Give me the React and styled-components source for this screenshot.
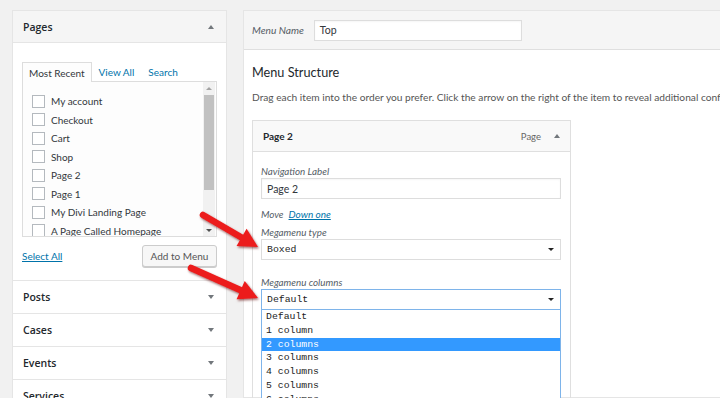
import React from 'react';
import styled, { createGlobalStyle, css } from 'styled-components';

const GlobalStyle = createGlobalStyle`
    body {
        margin: 0;
        background: #f1f1f1;
        font-family: Lato, "Noto Sans", sans-serif;
        color: #444;
        overflow: hidden;
    }
`;

const Page = styled.div`
    position: relative;
    display: flex;
    gap: 16px;
    width: 720px;
    height: 398px;
    padding: 10px 0 0 12px;
    box-sizing: border-box;
    overflow: hidden;
`;

/* ---------- left column ---------- */

const Sidebar = styled.div`
    flex: none;
    width: 215px;
    background: #fff;
    border: 1px solid #e5e5e5;
    box-sizing: border-box;
    align-self: flex-start;
`;

const Section = styled.div`
    & + & {
        border-top: 1px solid #e5e5e5;
    }
`;

const SectionTitle = styled.div`
    display: flex;
    align-items: center;
    justify-content: space-between;
    height: 32px;
    padding: 0 12px 0 10px;
    background: ${({ open }) => (open ? '#f5f5f5' : '#fff')};
    border-bottom: ${({ open }) => (open ? '1px solid #e5e5e5' : 'none')};
    box-sizing: border-box;
    font-family: "Open Sans", Lato, sans-serif;
    font-size: 10.5px;
    font-weight: 600;
    color: #23282d;
`;

const Caret = styled.span`
    width: 0;
    height: 0;
    border-left: ${({ size }) => size || 3.5}px solid transparent;
    border-right: ${({ size }) => size || 3.5}px solid transparent;
    ${({ up, color, size }) =>
        up
            ? css`border-bottom: ${(size || 3.5) + 0.5}px solid ${color || '#72777c'};`
            : css`border-top: ${(size || 3.5) + 0.5}px solid ${color || '#72777c'};`}
`;

const PagesBody = styled.div`
    padding: 19px 9px 0;
    height: 237px;
    box-sizing: border-box;
`;

const Tabs = styled.div`
    display: flex;
    height: 19px;
    position: relative;
    z-index: 1;
`;

const Tab = styled.div`
    display: flex;
    align-items: center;
    padding: 0 ${({ active }) => (active ? 6 : 7)}px;
    font-size: 10px;
    color: ${({ active }) => (active ? '#32373c' : '#0073aa')};
    ${({ active }) =>
        active &&
        css`
            background: #fdfdfd;
            border: 1px solid #ddd;
            border-bottom: none;
            height: 20px;
            box-sizing: border-box;
        `}
`;

const ListBox = styled.div`
    display: flex;
    height: 156px;
    border: 1px solid #ddd;
    background: #fdfdfd;
    box-sizing: border-box;
    overflow: hidden;
`;

const PageList = styled.div`
    flex: 1;
    padding: 10px 0 0 9px;
`;

const PageRow = styled.label`
    display: flex;
    align-items: center;
    height: 18.5px;
    font-size: 10px;
    color: #32373c;
    white-space: nowrap;
`;

const Checkbox = styled.span`
    flex: none;
    width: 13px;
    height: 13px;
    margin-right: 6px;
    border: 1px solid #b4b9be;
    background: #fff;
    box-sizing: border-box;
`;

const Scrollbar = styled.div`
    flex: none;
    width: 12px;
    margin-right: 1px;
    background: #f1f1f1;
    display: flex;
    flex-direction: column;
    align-items: center;
`;

const ScrollButton = styled.div`
    height: 12px;
    display: flex;
    align-items: center;
    justify-content: center;
`;

const ScrollThumb = styled.div`
    width: 10px;
    height: 95px;
    margin-top: 1px;
    background: #c1c1c1;
`;

const ScrollTrack = styled.div`
    flex: 1;
`;

const BoxFooter = styled.div`
    display: flex;
    align-items: center;
    justify-content: space-between;
    padding-top: 8px;
`;

const Link = styled.a`
    color: #0073aa;
    text-decoration: underline;
    font-size: 10px;
    font-style: ${({ italic }) => (italic ? 'italic' : 'normal')};
`;

const Button = styled.button`
    height: 22px;
    width: 75px;
    padding: 0;
    border: 1px solid #ccc;
    border-radius: 3px;
    background: #f7f7f7;
    box-shadow: 0 1px 0 #ccc;
    font-family: inherit;
    font-size: 10px;
    color: #555;
`;

/* ---------- right column ---------- */

const Main = styled.div`
    flex: none;
    width: 520px;
    background: #fff;
    border: 1px solid #e5e5e5;
    border-right: none;
    box-sizing: border-box;
`;

const MenuHeader = styled.div`
    display: flex;
    align-items: center;
    height: 38px;
    padding: 0 8px;
    background: #f5f5f5;
    border-bottom: 1px solid #dfdfdf;
`;

const InlineLabel = styled.span`
    font-size: 10.2px;
    font-style: italic;
    color: #555d66;
    margin-right: 10px;
`;

const TextInput = styled.div`
    display: flex;
    align-items: center;
    width: ${({ width }) => width || 300}px;
    height: 21px;
    padding: 0 5px;
    border: 1px solid #ddd;
    box-shadow: inset 0 1px 2px rgba(0, 0, 0, 0.04);
    background: #fff;
    box-sizing: border-box;
    font-size: 10.5px;
    color: #32373c;
`;

const MainBody = styled.div`
    padding: 14px 8px 0;
`;

const Heading = styled.h3`
    margin: 0;
    font-size: 12.7px;
    line-height: 16px;
    font-weight: 400;
    color: #23282d;
`;

const Description = styled.p`
    margin: 10px 0 16px;
    font-size: 10.2px;
    line-height: 14px;
    color: #555;
    white-space: nowrap;
`;

const ItemBox = styled.div`
    width: 319px;
`;

const ItemHeader = styled.div`
    display: flex;
    align-items: center;
    height: 32px;
    padding: 0 10px;
    border: 1px solid #dfdfdf;
    background: #f9f9f9;
    box-sizing: border-box;
`;

const ItemTitle = styled.span`
    flex: 1;
    font-size: 10px;
    font-weight: 700;
    color: #23282d;
`;

const ItemType = styled.span`
    font-size: 9.5px;
    color: #666;
    margin-right: 13px;
`;

const ItemBody = styled.div`
    padding: 13px 9px 0 8px;
    height: 260px;
    border: 1px solid #dfdfdf;
    border-top: none;
`;

const Field = styled.div`
    margin-top: ${({ gap }) => gap || 0}px;
    position: relative;
`;

const FieldLabel = styled.div`
    height: 13px;
    line-height: 13px;
    font-size: 9.8px;
    font-style: italic;
    color: #555d66;
`;

const MoveRow = styled.div`
    display: flex;
    align-items: center;
    gap: 5px;
    height: 13px;
    margin-top: 8px;
    font-size: 9.8px;
    font-style: italic;
    color: #555d66;
`;

const Select = styled.div`
    display: flex;
    align-items: center;
    justify-content: space-between;
    width: 300px;
    height: 21px;
    padding: 0 6px 0 5px;
    border: 1px solid ${({ focused }) => (focused ? '#7eb4ea' : '#ddd')};
    background: #fff;
    box-sizing: border-box;
    font-family: "Liberation Mono", "DejaVu Sans Mono", monospace;
    font-size: 9.8px;
    color: #222;
`;

const Options = styled.ul`
    position: absolute;
    left: 0;
    top: 100%;
    width: 300px;
    margin: 0;
    padding: 0;
    list-style: none;
    background: #fff;
    border: 1px solid #7eb4ea;
    border-top: none;
    box-sizing: border-box;
`;

const Option = styled.li`
    height: 13.8px;
    line-height: 13.8px;
    padding: 0 4px;
    font-family: "Liberation Mono", "DejaVu Sans Mono", monospace;
    font-size: 9.8px;
    background: ${({ selected }) => (selected ? '#3399ff' : 'transparent')};
    color: ${({ selected }) => (selected ? '#fff' : '#222')};
`;

const Overlay = styled.svg`
    position: absolute;
    left: 0;
    top: 0;
    pointer-events: none;
`;

const pages = [
    'My account',
    'Checkout',
    'Cart',
    'Shop',
    'Page 2',
    'Page 1',
    'My Divi Landing Page',
    'A Page Called Homepage',
];

const collapsed = ['Posts', 'Cases', 'Events', 'Services'];

const columnOptions = ['Default', '1 column', '2 columns', '3 columns', '4 columns', '5 columns', '6 columns'];

function Arrow({ from, to }) {
    const dx = to[0] - from[0];
    const dy = to[1] - from[1];
    const len = Math.hypot(dx, dy);
    const ux = dx / len;
    const uy = dy / len;
    const bx = to[0] - 19 * ux;
    const by = to[1] - 19 * uy;
    const head = [
        [to[0], to[1]],
        [bx - 10 * uy, by + 10 * ux],
        [bx + 10 * uy, by - 10 * ux],
    ]
        .map((p) => p.join(','))
        .join(' ');
    return (
        <g filter="url(#arrowShadow)">
            <line x1={from[0]} y1={from[1]} x2={bx + 2 * ux} y2={by + 2 * uy} stroke="#ec1b1b" strokeWidth="6.5" strokeLinecap="round" />
            <polygon points={head} fill="#ec1b1b" />
        </g>
    );
}

export default function App() {
    return (
        <>
            <GlobalStyle />
            <Page>
                <Sidebar>
                    <Section>
                        <SectionTitle open>
                            Pages
                            <Caret up />
                        </SectionTitle>
                        <PagesBody>
                            <Tabs>
                                <Tab active>Most Recent</Tab>
                                <Tab>View All</Tab>
                                <Tab>Search</Tab>
                            </Tabs>
                            <ListBox>
                                <PageList>
                                    {pages.map((p) => (
                                        <PageRow key={p}>
                                            <Checkbox />
                                            {p}
                                        </PageRow>
                                    ))}
                                </PageList>
                                <Scrollbar>
                                    <ScrollButton><Caret up size={3} color="#a3a3a3" /></ScrollButton>
                                    <ScrollThumb />
                                    <ScrollTrack />
                                    <ScrollButton><Caret size={3} color="#505050" /></ScrollButton>
                                </Scrollbar>
                            </ListBox>
                            <BoxFooter>
                                <Link>Select All</Link>
                                <Button>Add to Menu</Button>
                            </BoxFooter>
                        </PagesBody>
                    </Section>
                    {collapsed.map((s) => (
                        <Section key={s}>
                            <SectionTitle>
                                {s}
                                <Caret />
                            </SectionTitle>
                        </Section>
                    ))}
                </Sidebar>

                <Main>
                    <MenuHeader>
                        <InlineLabel>Menu Name</InlineLabel>
                        <TextInput width={208}>Top</TextInput>
                    </MenuHeader>
                    <MainBody>
                        <Heading>Menu Structure</Heading>
                        <Description>
                            Drag each item into the order you prefer. Click the arrow on the right of the item to reveal additional configuration options.
                        </Description>
                        <ItemBox>
                            <ItemHeader>
                                <ItemTitle>Page 2</ItemTitle>
                                <ItemType>Page</ItemType>
                                <Caret up />
                            </ItemHeader>
                            <ItemBody>
                                <Field>
                                    <FieldLabel>Navigation Label</FieldLabel>
                                    <TextInput>Page 2</TextInput>
                                </Field>
                                <MoveRow>
                                    Move <Link italic>Down one</Link>
                                </MoveRow>
                                <Field gap={6}>
                                    <FieldLabel>Megamenu type</FieldLabel>
                                    <Select>
                                        Boxed
                                        <Caret size={3} color="#222" />
                                    </Select>
                                </Field>
                                <Field gap={16}>
                                    <FieldLabel>Megamenu columns</FieldLabel>
                                    <Select focused>
                                        Default
                                        <Caret size={3} color="#222" />
                                    </Select>
                                    <Options>
                                        {columnOptions.map((o) => (
                                            <Option key={o} selected={o === '2 columns'}>{o}</Option>
                                        ))}
                                    </Options>
                                </Field>
                            </ItemBody>
                        </ItemBox>
                    </MainBody>
                </Main>

                <Overlay width="720" height="398">
                    <defs>
                        <filter id="arrowShadow" x="-20%" y="-20%" width="140%" height="140%">
                            <feDropShadow dx="1" dy="1.5" stdDeviation="1" floodColor="#5a0000" floodOpacity="0.6" />
                        </filter>
                    </defs>
                    <Arrow from={[203, 215]} to={[258, 247]} />
                    <Arrow from={[191, 268]} to={[258, 298]} />
                </Overlay>
            </Page>
        </>
    );
}
